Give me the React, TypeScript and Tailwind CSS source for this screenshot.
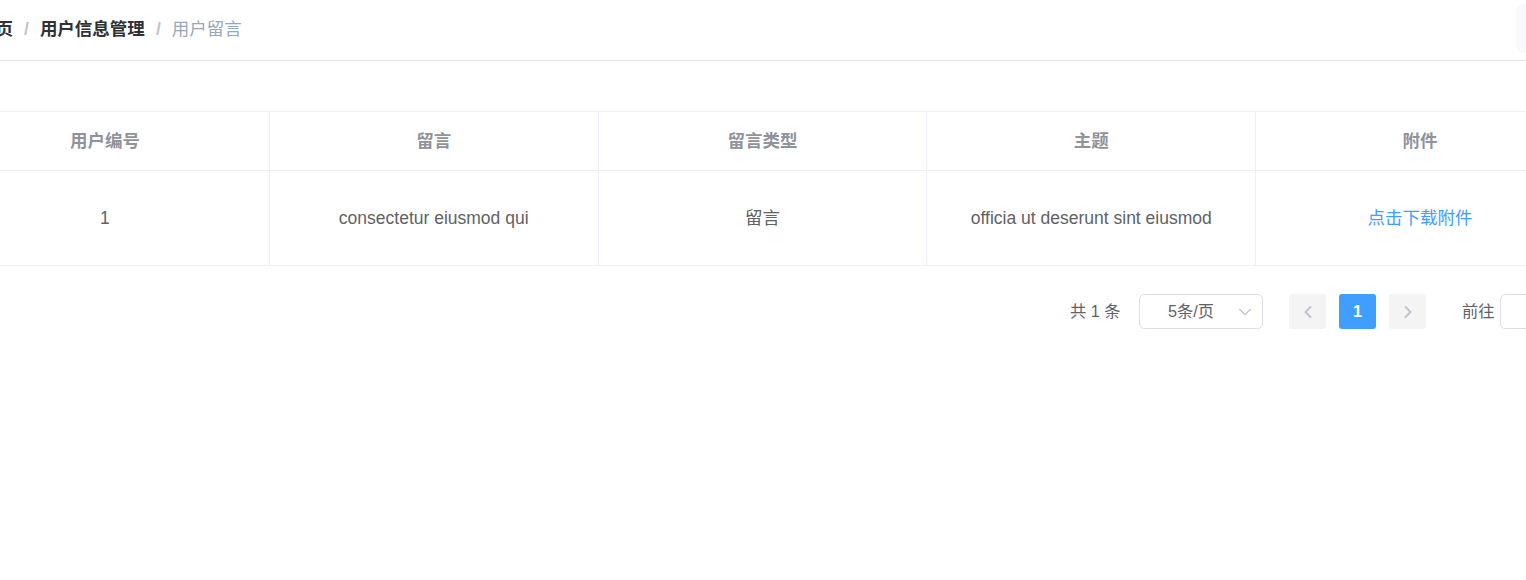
import { ChevronDown, ChevronLeft, ChevronRight } from "lucide-react";

const columns = ["用户编号", "留言", "留言类型", "主题", "附件"];

export default function App() {
  return (
    <div
      className="h-[580px] w-[1526px] overflow-hidden bg-white text-[#606266]"
      style={{ fontFamily: '"Liberation Sans", Arial, "Noto Sans CJK SC", sans-serif' }}
    >
      {/* 顶部导航 */}
      <div className="flex h-[61px] items-center border-b border-[#e6e6e6]">
        <nav className="ml-[-22px] flex shrink-0 items-center whitespace-nowrap text-[17.5px] leading-none">
          <span className="font-bold text-[#303133]">首页</span>
          <span className="mx-[11px] font-bold text-[#c0c4cc]">/</span>
          <span className="font-bold text-[#303133]">用户信息管理</span>
          <span className="mx-[11px] font-bold text-[#c0c4cc]">/</span>
          <span className="text-[#97a8be]">用户留言</span>
        </nav>
        <div className="ml-auto mr-[-40px] mt-1 h-[49px] w-[50px] shrink-0 self-start rounded-lg bg-[#f8f9fa]" />
      </div>

      {/* 表格 */}
      <div className="ml-[-59px] mt-[50px] w-[1644px]">
        <div className="grid grid-cols-5 border-y border-[#ebeef5]">
          {columns.map((c) => (
            <div
              key={c}
              className="flex h-[58px] items-center justify-center border-r border-[#ebeef5] text-[17.5px] font-bold text-[#909399]"
            >
              {c}
            </div>
          ))}
        </div>
        <div className="grid grid-cols-5 border-b border-[#ebeef5] text-[17.5px]">
          <div className="flex h-[94px] items-center justify-center border-r border-[#ebeef5]">1</div>
          <div className="flex items-center justify-center border-r border-[#ebeef5]">consectetur eiusmod qui</div>
          <div className="flex items-center justify-center border-r border-[#ebeef5]">留言</div>
          <div className="flex items-center justify-center border-r border-[#ebeef5]">officia ut deserunt sint eiusmod</div>
          <div className="flex items-center justify-center border-r border-[#ebeef5] text-[#409eff]">点击下载附件</div>
        </div>
      </div>

      {/* 分页 */}
      <div className="ml-[1070px] mt-[28px] flex w-max items-center whitespace-nowrap text-[16.25px]">
        <span className="w-[50px] shrink-0">共 1 条</span>
        <div className="ml-[19px] flex h-[35px] w-[124px] shrink-0 items-center rounded-[5px] border border-[#dcdfe6] pl-[28px] pr-[6px]">
          <span className="flex-1">5条/页</span>
          <ChevronDown className="h-[22px] w-[22px] text-[#c0c4cc]" strokeWidth={1.2} />
        </div>
        <div className="ml-[26px] flex shrink-0 gap-[13px]">
          <div className="flex h-[35px] w-[37px] items-center justify-center rounded-[3px] bg-[#f4f4f5] text-[#c0c4cc]">
            <ChevronLeft className="h-5 w-5" strokeWidth={2.5} />
          </div>
          <div className="flex h-[35px] w-[37px] items-center justify-center rounded-[3px] bg-[#409eff] font-bold text-white">
            1
          </div>
          <div className="flex h-[35px] w-[37px] items-center justify-center rounded-[3px] bg-[#f4f4f5] text-[#c0c4cc]">
            <ChevronRight className="h-5 w-5" strokeWidth={2.5} />
          </div>
        </div>
        <span className="ml-[36px] shrink-0">前往</span>
        <div className="ml-[5px] h-[35px] w-[60px] shrink-0 rounded-[5px] border border-[#dcdfe6]" />
      </div>
    </div>
  );
}
